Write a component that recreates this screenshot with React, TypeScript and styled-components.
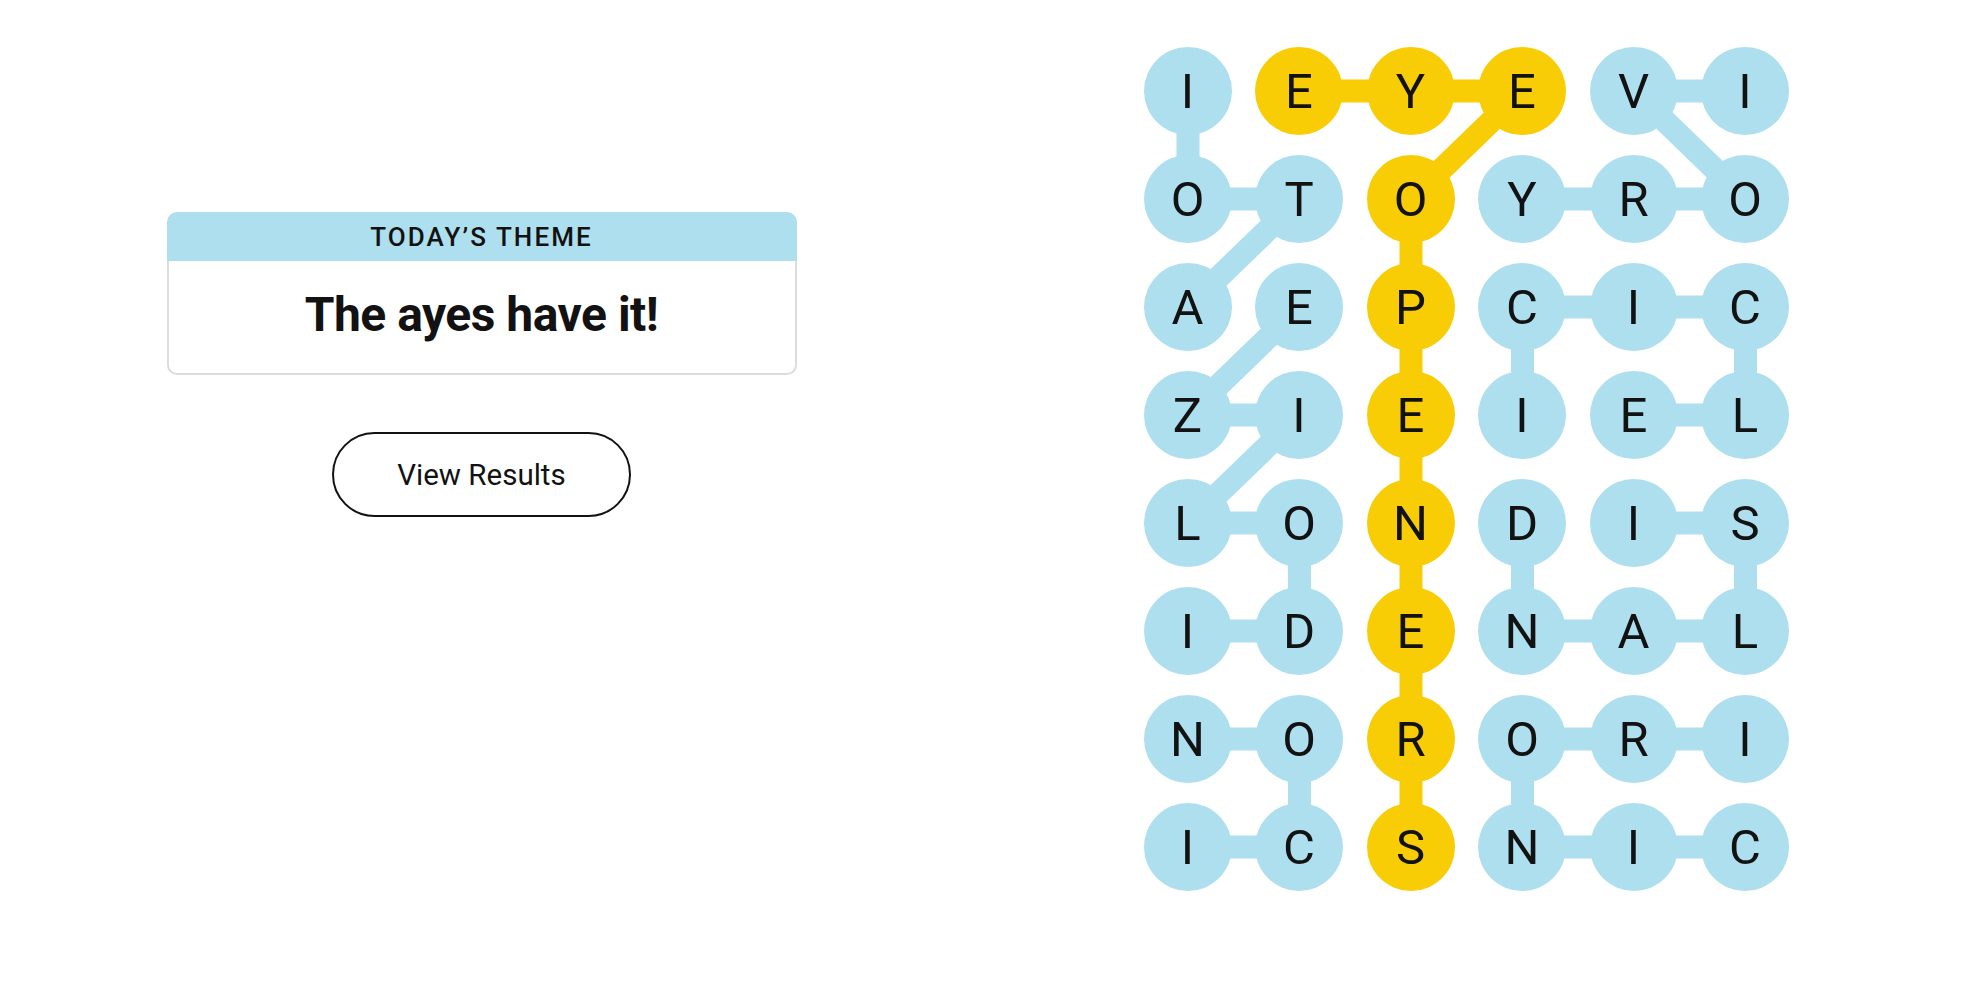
import React from 'react';
import styled, { createGlobalStyle } from 'styled-components';

const GlobalStyle = createGlobalStyle`
  html, body {
    margin: 0;
    padding: 0;
    background: #ffffff;
  }
  body {
    font-family: Roboto, "Liberation Sans", Arial, sans-serif;
    color: #121212;
  }
`;

const BLUE = '#aedfee';
const YELLOW = '#f8cd05';

const CELL = 88;
const COL_GAP = 23.5;
const ROW_GAP = 20;
const STEP_X = CELL + COL_GAP;
const STEP_Y = CELL + ROW_GAP;

const Page = styled.main`
  display: flex;
  align-items: flex-start;
  width: 100%;
  min-height: 982px;
`;

const LeftPanel = styled.section`
  width: 963px;
  display: flex;
  flex-direction: column;
  align-items: center;
  padding-top: 212px;
`;

const ThemeCard = styled.div`
  width: 630px;
  display: flex;
  flex-direction: column;
`;

const ThemeHeader = styled.div`
  height: 49px;
  background: ${BLUE};
  border-radius: 10px 10px 0 0;
  display: flex;
  align-items: center;
  justify-content: center;
  font-size: 26px;
  font-weight: 500;
  letter-spacing: 2.1px;
  text-transform: uppercase;
  padding-top: 1px;
  box-sizing: border-box;
`;

const ThemeBody = styled.div`
  height: 114px;
  box-sizing: border-box;
  border: 2px solid #dcdcdc;
  border-top: none;
  border-radius: 0 0 10px 10px;
  display: flex;
  align-items: center;
  justify-content: center;
  padding-bottom: 4px;
`;

const ThemeTitle = styled.h1`
  margin: 0;
  font-size: 48px;
  font-weight: 700;
  letter-spacing: -0.5px;
  line-height: 1;
`;

const ResultsButton = styled.button`
  margin-top: 57px;
  width: 299px;
  height: 85px;
  border: 2px solid #121212;
  border-radius: 43px;
  background: #ffffff;
  color: #121212;
  font-family: Roboto, "Liberation Sans", Arial, sans-serif;
  font-size: 29.5px;
  font-weight: 400;
  cursor: pointer;
`;

const Board = styled.div`
  position: relative;
  margin-left: 180.5px;
  margin-top: 47px;
  display: grid;
  grid-template-columns: repeat(6, ${CELL}px);
  grid-auto-rows: ${CELL}px;
  column-gap: ${COL_GAP}px;
  row-gap: ${ROW_GAP}px;
`;

const Links = styled.svg`
  position: absolute;
  left: 0;
  top: 0;
  pointer-events: none;
`;

const Letter = styled.button<{ $tone: 'blue' | 'yellow' }>`
  position: relative;
  width: ${CELL}px;
  height: ${CELL}px;
  border: none;
  border-radius: 50%;
  padding: 0;
  background: ${(p) => (p.$tone === 'yellow' ? YELLOW : BLUE)};
  color: #121212;
  font-family: Roboto, "Liberation Sans", Arial, sans-serif;
  font-size: 49px;
  font-weight: 400;
  line-height: 1;
  display: flex;
  align-items: center;
  justify-content: center;
`;

const grid = ['IEYEVI', 'OTOYRO', 'AEPCIC', 'ZIEIEL', 'LONDIS', 'IDENAL', 'NORORI', 'ICSNIC'];

type Cell = [number, number];

const words: { path: Cell[]; spangram?: boolean }[] = [
  { path: [[0, 0], [1, 0], [1, 1], [2, 0]] },
  {
    path: [[0, 1], [0, 2], [0, 3], [1, 2], [2, 2], [3, 2], [4, 2], [5, 2], [6, 2], [7, 2]],
    spangram: true,
  },
  { path: [[0, 5], [0, 4], [1, 5], [1, 4], [1, 3]] },
  { path: [[5, 0], [5, 1], [4, 1], [4, 0], [3, 1], [3, 0], [2, 1]] },
  { path: [[7, 0], [7, 1], [6, 1], [6, 0]] },
  { path: [[3, 3], [2, 3], [2, 4], [2, 5], [3, 5], [3, 4]] },
  { path: [[4, 4], [4, 5], [5, 5], [5, 4], [5, 3], [4, 3]] },
  { path: [[6, 5], [6, 4], [6, 3], [7, 3], [7, 4], [7, 5]] },
];

const spangramCells = new Set(
  words.filter((w) => w.spangram).flatMap((w) => w.path.map(([r, c]) => `${r}-${c}`))
);

const centre = ([r, c]: Cell) => ({ x: c * STEP_X + CELL / 2, y: r * STEP_Y + CELL / 2 });

const App: React.FC = () => {
  const boardW = 6 * CELL + 5 * COL_GAP;
  const boardH = 8 * CELL + 7 * ROW_GAP;

  return (
    <>
      <GlobalStyle />
      <Page>
        <LeftPanel>
          <ThemeCard>
            <ThemeHeader>Today’s Theme</ThemeHeader>
            <ThemeBody>
              <ThemeTitle>The ayes have it!</ThemeTitle>
            </ThemeBody>
          </ThemeCard>
          <ResultsButton>View Results</ResultsButton>
        </LeftPanel>

        <Board>
          <Links width={boardW} height={boardH} viewBox={`0 0 ${boardW} ${boardH}`}>
            {words.map((w, wi) =>
              w.path.slice(1).map((cell, i) => {
                const a = centre(w.path[i]);
                const b = centre(cell);
                return (
                  <line
                    key={`${wi}-${i}`}
                    x1={a.x}
                    y1={a.y}
                    x2={b.x}
                    y2={b.y}
                    stroke={w.spangram ? YELLOW : BLUE}
                    strokeWidth={23}
                  />
                );
              })
            )}
          </Links>
          {grid.map((row, r) =>
            row.split('').map((ch, c) => (
              <Letter key={`${r}-${c}`} $tone={spangramCells.has(`${r}-${c}`) ? 'yellow' : 'blue'}>
                {ch}
              </Letter>
            ))
          )}
        </Board>
      </Page>
    </>
  );
};

export default App;
